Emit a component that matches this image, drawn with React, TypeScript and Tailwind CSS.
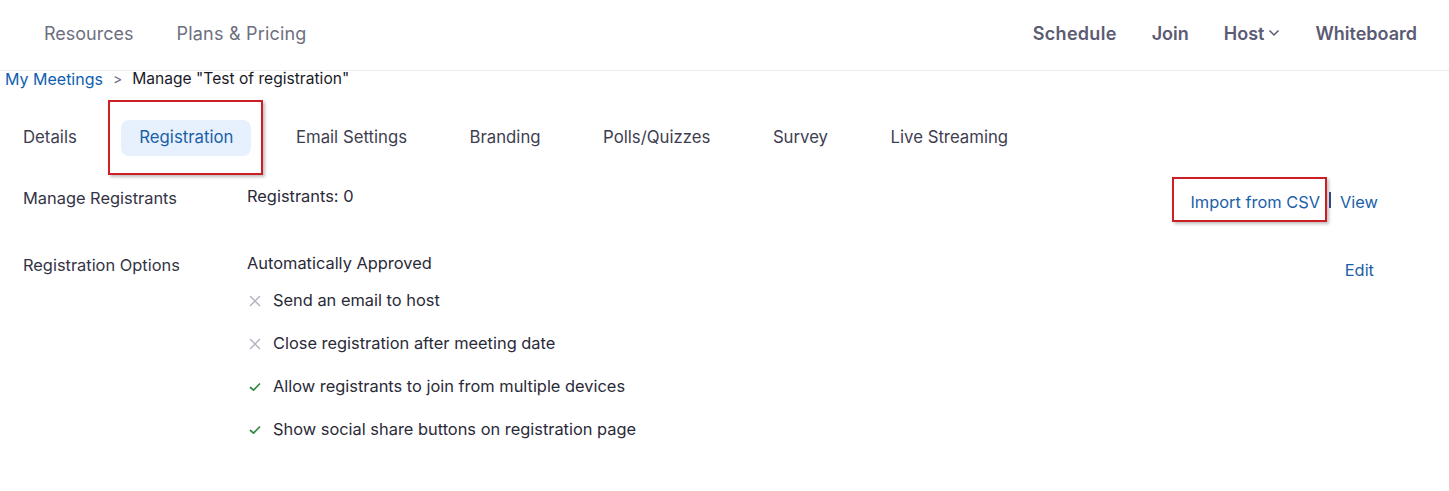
import React from "react";

const Cross = () => (
  <svg width="12" height="12" viewBox="0 0 12 12" className="shrink-0">
    <path d="M1.5 1.5 L10.5 10.5 M10.5 1.5 L1.5 10.5" stroke="#b4b4c2" strokeWidth="1.5" strokeLinecap="round" />
  </svg>
);

const Check = () => (
  <svg width="12" height="12" viewBox="0 0 12 12" className="shrink-0">
    <path d="M1.5 6.5 L4.5 9.2 L10.5 3" stroke="#2f8a3e" strokeWidth="1.7" fill="none" strokeLinecap="round" strokeLinejoin="round" />
  </svg>
);

export default function App() {
  const tabs = ["Details", "Registration", "Email Settings", "Branding", "Polls/Quizzes", "Survey", "Live Streaming"];
  const options: [boolean, string][] = [
    [false, "Send an email to host"],
    [false, "Close registration after meeting date"],
    [true, "Allow registrants to join from multiple devices"],
    [true, "Show social share buttons on registration page"],
  ];
  return (
    <div className="w-[1449px] h-[491px] bg-white overflow-hidden" style={{ fontFamily: "Inter, 'Noto Sans', sans-serif" }}>
      {/* header */}
      <div className="h-[71px] flex items-center justify-between border-b border-[#ebebee] pl-[44px] pr-[32px] pb-[4px]">
        <div className="flex items-center gap-[43px] text-[18px] text-[#6e7080]">
          <span>Resources</span>
          <span className="tracking-[0.2px]">Plans &amp; Pricing</span>
        </div>
        <div className="flex items-center gap-[35px] text-[18px] font-semibold text-[#5b5b73]">
          <span className="tracking-[0.3px]">Schedule</span>
          <span>Join</span>
          <span className="flex items-center gap-[4px]">
            Host
            <svg width="12" height="8" viewBox="0 0 12 8">
              <path d="M1.5 1.5 L6 6 L10.5 1.5" stroke="#5b5b73" strokeWidth="1.5" fill="none" />
            </svg>
          </span>
          <span>Whiteboard</span>
        </div>
      </div>
      {/* breadcrumb */}
      <div className="flex items-center pl-[5px] h-[16px] text-[16px] leading-[16px]">
        <span className="text-[#0e5eb0]">My Meetings</span>
        <span className="ml-[10px] mr-[10px] text-[#6e7080] text-[14px]">&gt;</span>
        <span className="text-[#1a1a26] text-[15.6px]">Manage "Test of registration"</span>
      </div>
      {/* tabs */}
      <div className="flex items-center pl-[5px] mt-[33px] gap-[26.5px] text-[16.75px]">
        {tabs.map((t) =>
          t === "Registration" ? (
            <div key={t} className="relative">
              <div className="absolute -left-[13px] -top-[20px] w-[155px] h-[75px] border-2 border-[#cc1f24] shadow-[2px_2px_3px_rgba(0,0,0,0.25)]" />
              <div className="h-[36px] px-[18px] flex items-center rounded-[8px] bg-[#e6f1fd] text-[#1b5fa8]">{t}</div>
            </div>
          ) : (
            <div key={t} className="h-[36px] px-[18px] flex items-center text-[#3e3e50]">
              {t}
            </div>
          )
        )}
      </div>
      {/* content */}
      <div className="pl-[23px] pr-[71px] mt-[23px] text-[16.4px]">
        <div className="flex">
          <div className="w-[224px] text-[#333344] pt-[7px]">Manage Registrants</div>
          <div className="flex-1 text-[#2a2a38] pt-[5px]">Registrants: 0</div>
          <div className="flex items-center pt-[11px]">
            <div className="relative">
              <div className="absolute -left-[18px] -top-[13px] w-[155px] h-[45px] border-2 border-[#cc1f24] shadow-[2px_2px_3px_rgba(0,0,0,0.25)]" />
              <span className="text-[#1b5fa8]">Import from CSV</span>
            </div>
            <div className="w-[2px] h-[16px] bg-[#3a4a8a] mx-[9px] -mt-[4px]" />
            <span className="text-[#1b5fa8]">View</span>
          </div>
        </div>
        <div className="flex mt-[35px]">
          <div className="w-[224px] text-[#333344] pt-[3px]">Registration Options</div>
          <div className="flex-1 text-[#2a2a38]">
            <div className="pt-[1px]">Automatically Approved</div>
            <div className="flex flex-col gap-[22px] mt-[15px]">
              {options.map(([ok, label]) => (
                <div key={label} className="flex items-center gap-[12px] pl-[2px] h-[21px]">
                  {ok ? <Check /> : <Cross />}
                  <span>{label}</span>
                </div>
              ))}
            </div>
          </div>
          <div className="text-[#1b5fa8] pt-[8px] pr-[4px]">Edit</div>
        </div>
      </div>
    </div>
  );
}
